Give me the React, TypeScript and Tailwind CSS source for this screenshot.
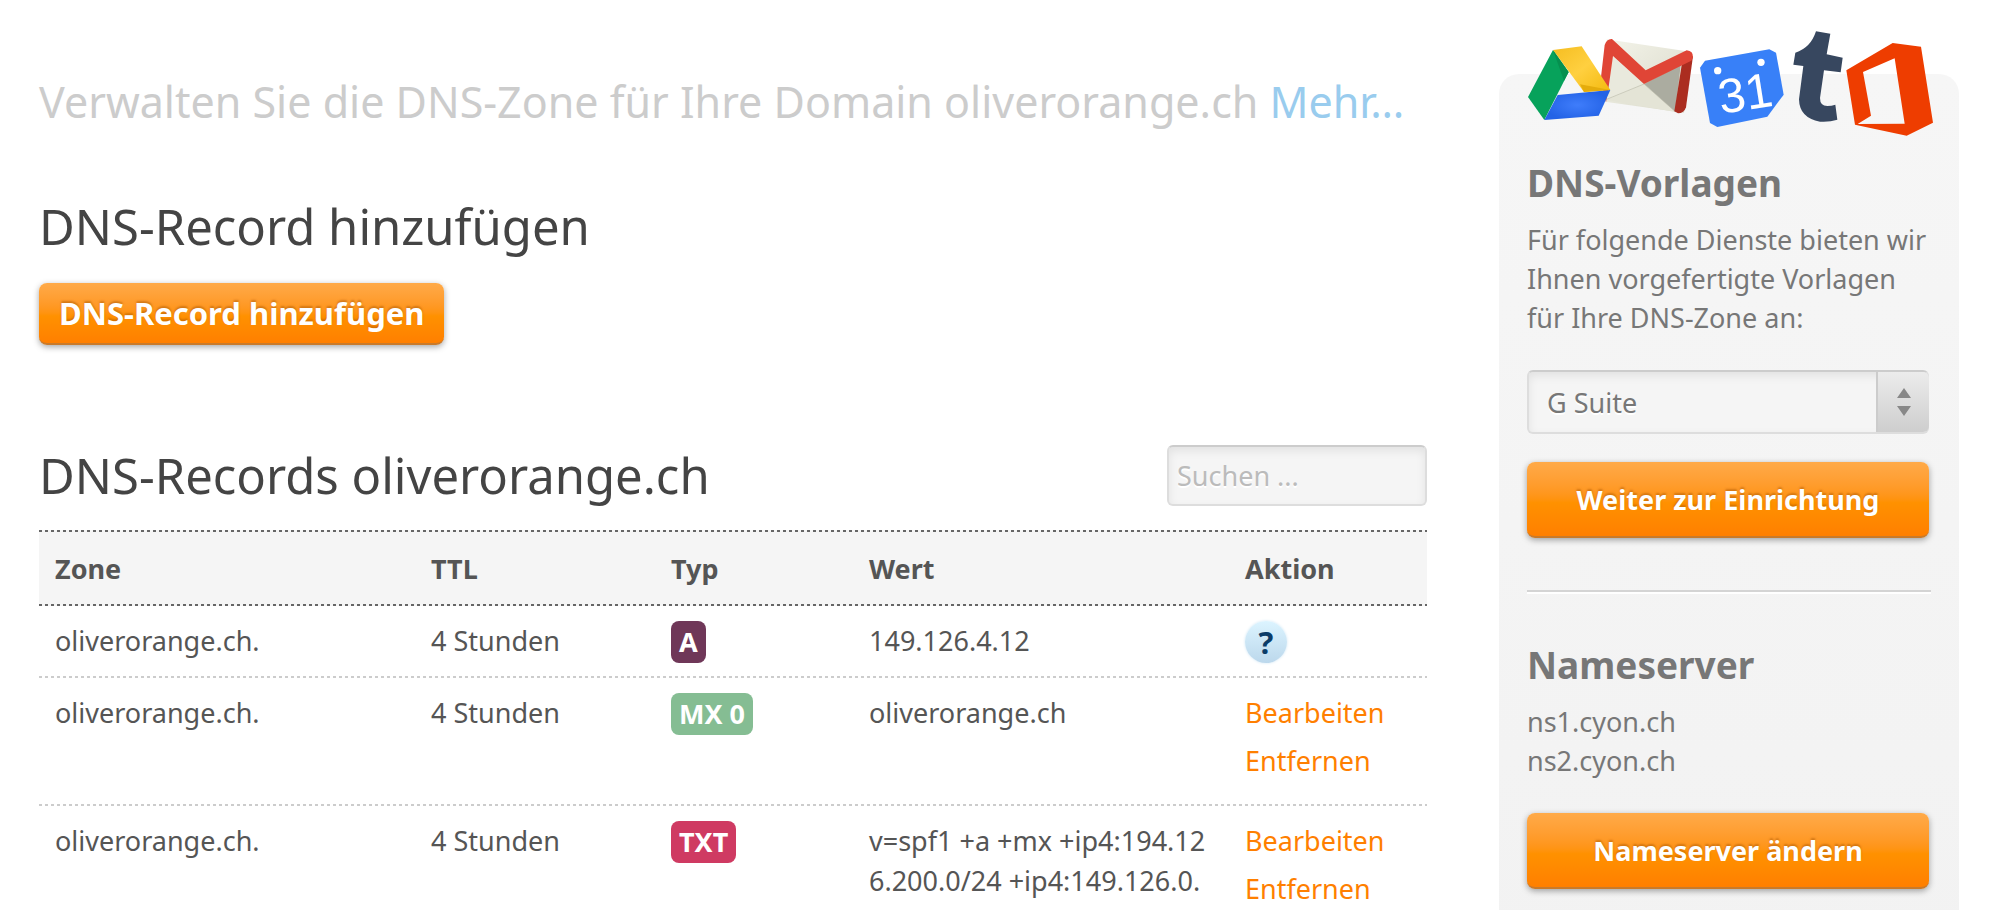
import { ReactNode } from 'react';

type DnsRecord = {
  type: string;
  badge: string;
  value: ReactNode;
  editable: boolean;
};

const records: DnsRecord[] = [
  { type: 'A', badge: 'bg-[#6f3758]', value: '149.126.4.12', editable: false },
  { type: 'MX 0', badge: 'bg-[#85bd93]', value: 'oliverorange.ch', editable: true },
  {
    type: 'TXT',
    badge: 'bg-[#cf3a62]',
    value: 'v=spf1 +a +mx +ip4:194.126.200.0/24 +ip4:149.126.0.',
    editable: true,
  },
];

const orange =
  'rounded-lg bg-linear-to-b from-[#ffaa48] via-[#ff9100] via-55% to-[#ff7f00] font-bold text-white border-b-2 border-[#c97a2a] shadow-[0_2px_6px_rgba(0,0,0,0.35)] [text-shadow:0_-2px_2px_rgba(160,80,0,0.45)]';

const field =
  'rounded-md border-2 border-[#ddd] border-t-[#ccc] bg-[#f5f5f5] shadow-[inset_0_4px_10px_rgba(0,0,0,0.08)] [text-shadow:0_2px_0_#fff]';

// dotted rules: 3px dash, 3px gap, 2px high
const darkDots = 'bg-[repeating-linear-gradient(90deg,#666_0_3px,transparent_3px_6px)] bg-size-[100%_2px] bg-repeat-x';
const lightDots = 'bg-[repeating-linear-gradient(90deg,#ccc_0_3px,transparent_3px_6px)] bg-size-[100%_2px] bg-repeat-x';

function ServiceLogos() {
  return (
    <svg viewBox="111 30 1218 321" className="-mt-[44px] h-[107px] w-[406px] max-w-none" aria-hidden="true">
      <defs>
        <linearGradient id="yellow" x1="0" y1="0" x2="1" y2="1">
          <stop offset="0" stopColor="#f5bd20" />
          <stop offset="0.5" stopColor="#ffd040" />
          <stop offset="1" stopColor="#f3b90e" />
        </linearGradient>
        <radialGradient id="blue">
          <stop offset="0" stopColor="#3f7dfb" />
          <stop offset="1" stopColor="#2463e6" />
        </radialGradient>
        <linearGradient id="paper" x1="0" y1="0" x2="1" y2="1">
          <stop offset="0" stopColor="#f4f4ea" />
          <stop offset="1" stopColor="#d8d8c8" />
        </linearGradient>
      </defs>

      {/* Gmail */}
      <path d="M350 58 L600 95 L582 278 L345 245Z" fill="url(#paper)" />
      <path d="M368 110 L462 192 L350 240Z" fill="#e9e9dd" />
      <path d="M462 192 L572 135 L556 276Z" fill="#abaca0" />
      <path d="M462 192 L350 240 L556 276Z" fill="#e4e4d6" />
      <path d="M350 238 L462 192 L556 275" fill="none" stroke="#bdbdac" strokeWidth="2" />
      <path d="M576 130 L609 108 L588 262 Q582 280 564 280 L553 274Z" fill="#ab2d20" />
      <path d="M332 180 L344 75 Q350 56 366 57 L375 65 L467 151 L590 91 Q610 93 609 112 L604 122 L462 192 L369 108 L356 200 L348 247Z" fill="#e04536" />

      {/* Drive */}
      <path d="M189 90 L236 156 L163 300 L114 231Z" fill="#07a25b" />
      <path d="M189 90 L275 79 L361 210 L282 216Z" fill="url(#yellow)" />
      <path d="M203 225 L361 210 L326 287 L163 300Z" fill="url(#blue)" />
      <path d="M189 90 L236 156 L222 182Z" fill="#06904f" />
      <path d="M270 193 L361 210 L282 216Z" fill="#e5ac0c" />

      {/* Calendar */}
      <path d="M645 122 L838 88 L858 98 L881 224 L832 290 L682 321 L660 309 L630 143Z" fill="#3880f8" />
      <circle cx="683" cy="152" r="11" fill="#fff" />
      <circle cx="813" cy="127" r="11" fill="#fff" />
      <text
        x="765"
        y="270"
        textAnchor="middle"
        transform="rotate(-9 765 218)"
        className="fill-white font-['Liberation_Sans',sans-serif] text-[146px]"
      >
        31
      </text>

      {/* Tumblr */}
      <path
        d="M978 34 L1021 41 L1010 103 L1058 113 L1052 157 L1002 151 L990 234 Q990 258 1012 258 Q1025 258 1036 254 L1042 299 Q1018 307 990 305 Q928 294 927 238 L940 138 L910 134 L916 98 Q962 84 978 34Z"
        fill="#37475f"
      />

      {/* Office */}
      <path d="M1208 69 L1293 80 L1329 308 L1250 347 L1095 314 L1069 151Z M1119 156 L1143 287 L1103 312 L1244 311 L1214 115Z" fill="#ee3d00" fillRule="evenodd" />
    </svg>
  );
}

function RecordsTable() {
  return (
    <table className="mt-5 w-full table-fixed text-left text-[27px] leading-10 text-[#555]">
      <colgroup>
        <col />
        <col className="w-[240px]" />
        <col className="w-[198px]" />
        <col />
        <col className="w-[198px]" />
      </colgroup>
      <thead className="bg-[#f5f5f5]">
        <tr className={`h-[2px] ${darkDots}`}>
          <td colSpan={5} />
        </tr>
        <tr className={`h-[74px] bg-bottom ${darkDots}`}>
          <th className="px-4">Zone</th>
          <th className="px-4">TTL</th>
          <th className="px-4">Typ</th>
          <th className="px-4">Wert</th>
          <th className="px-4">Aktion</th>
        </tr>
      </thead>
      <tbody>
        {records.map((record) => (
          <tr key={record.type} className={`bg-bottom align-top ${lightDots}`}>
            <td className="px-4 py-[15px]">oliverorange.ch.</td>
            <td className="px-4 py-[15px]">4 Stunden</td>
            <td className="px-4 py-[15px]">
              <span className={`block w-fit rounded-lg px-2 leading-[42px] font-bold text-white ${record.badge}`}>
                {record.type}
              </span>
            </td>
            <td className="px-4 py-[15px] break-all">{record.value}</td>
            <td className="px-4 py-[15px]">
              {record.editable ? (
                <div className="flex flex-col items-start gap-2 pb-[10px] text-[#ff7f00]">
                  <a href="#">Bearbeiten</a>
                  <a href="#">Entfernen</a>
                </div>
              ) : (
                <button
                  type="button"
                  aria-label="Hilfe"
                  className="block size-[42px] rounded-full bg-linear-to-b from-[#dcf4ff] to-[#bcd8ec] text-center text-[31px] font-bold text-[#0b3c68] shadow-[0_0_3px_#cfe6f5]"
                >
                  ?
                </button>
              )}
            </td>
          </tr>
        ))}
      </tbody>
    </table>
  );
}

export default function App() {
  return (
    <div className="flex h-screen items-start gap-[72px] overflow-hidden bg-white pr-[51px] pl-[39px] font-['Noto_Sans','Open_Sans',sans-serif]">
      <main className="min-w-0 flex-1 pt-[72px]">
        <p className="text-[43px] leading-[60px] whitespace-nowrap text-[#ccc]">
          Verwalten Sie die DNS-Zone für Ihre Domain oliverorange.ch{' '}
          <a href="#" className="text-[#99ccee]">Mehr…</a>
        </p>

        <h2 className="mt-[59px] text-[49px] leading-[70px] text-[#444]">DNS-Record hinzufügen</h2>
        <button type="button" className={`mt-[22px] h-[62px] px-5 text-[31px] ${orange}`}>
          DNS-Record hinzufügen
        </button>

        <div className="mt-[95px] flex items-center justify-between">
          <h2 className="text-[49px] leading-[70px] text-[#444]">DNS-Records oliverorange.ch</h2>
          <input
            type="search"
            aria-label="Suchen"
            placeholder="Suchen ..."
            className={`h-[61px] w-[260px] px-2 text-[27px] text-[#777] placeholder:text-[#bbb] ${field}`}
          />
        </div>

        <RecordsTable />
      </main>

      <aside className="mt-[74px] min-h-screen w-[460px] shrink-0 rounded-[20px] bg-linear-to-b from-[#f6f6f6] to-[#f2f2f2] px-7 text-[27px] leading-[39px] text-[#777]">
        <ServiceLogos />
        <h3 className="mt-[21px] text-[37px] leading-[50px] font-bold">DNS-Vorlagen</h3>
        <p className="mt-3">Für folgende Dienste bieten wir Ihnen vorgefertigte Vorlagen für Ihre DNS-Zone an:</p>

        <div className="mt-[33px] grid gap-7 pr-0.5">
          <div className="grid">
            <select
              aria-label="DNS-Vorlage"
              className={`col-start-1 row-start-1 h-[64px] appearance-none pl-[18px] ${field}`}
            >
              <option>G Suite</option>
            </select>
            <span className="pointer-events-none col-start-1 row-start-1 my-[2px] flex w-[53px] items-center justify-center justify-self-end rounded-r-md border-l-2 border-[#ccc] bg-linear-to-b from-[#ececec] to-[#cecece]">
              <svg viewBox="0 0 14 28" className="h-7 w-[14px]" fill="#888" aria-hidden="true">
                <path d="M7 0 L14 10 H0Z M0 18 H14 L7 28Z" />
              </svg>
            </span>
          </div>
          <button type="button" className={`h-[76px] ${orange}`}>
            Weiter zur Einrichtung
          </button>
        </div>

        <hr className="mt-[52px] border-t-2 border-b-2 border-t-[#d4d4d4] border-b-white" />

        <h3 className="mt-[46px] text-[37px] leading-[50px] font-bold">Nameserver</h3>
        <p className="mt-3">
          ns1.cyon.ch
          <br />
          ns2.cyon.ch
        </p>
        <div className="mt-[33px] grid pr-0.5">
          <button type="button" className={`h-[76px] ${orange}`}>
            Nameserver ändern
          </button>
        </div>
      </aside>
    </div>
  );
}
